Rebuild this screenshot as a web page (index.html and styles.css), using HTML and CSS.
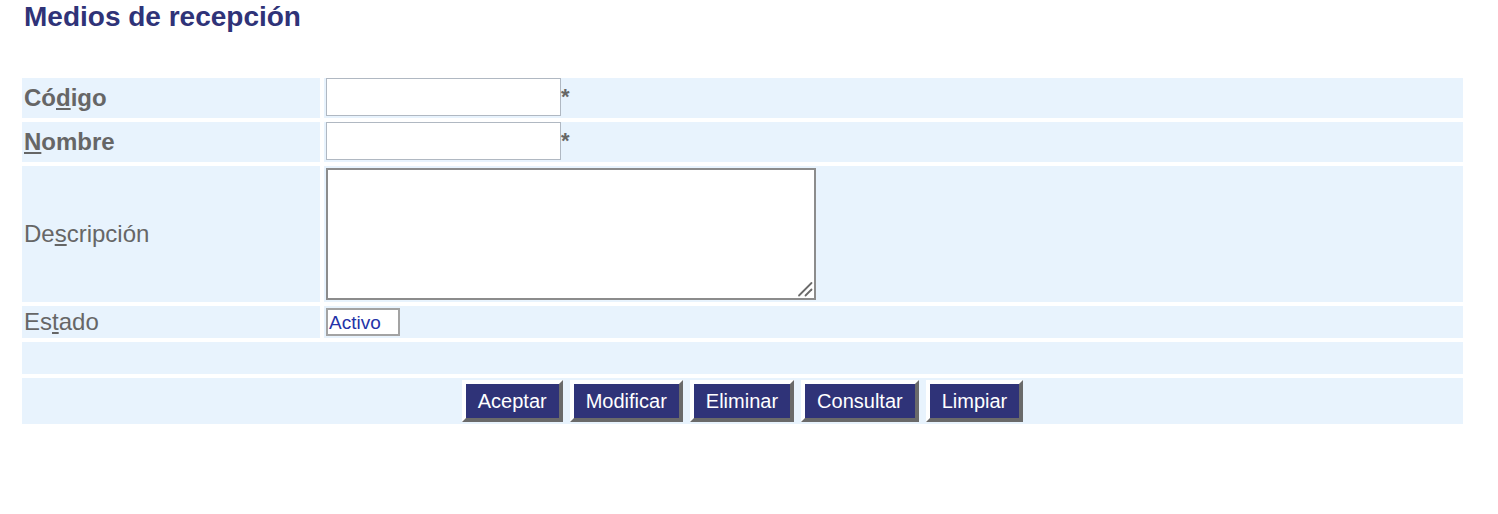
FILE: index.html
```html
<!DOCTYPE html>
<html lang="es">
<head>
<meta charset="utf-8">
<title>Medios de recepción</title>
<link rel="stylesheet" href="styles.css">
</head>
<body>
<h1 class="title">Medios de recepción</h1>
<form class="form">
  <div class="cell label bold">Có<u>d</u>igo</div>
  <div class="cell field"><input class="text-input" type="text"><span class="req">*</span></div>

  <div class="cell label bold"><u>N</u>ombre</div>
  <div class="cell field"><input class="text-input" type="text"><span class="req">*</span></div>

  <div class="cell label">De<u>s</u>cripción</div>
  <div class="cell field field-top">
    <div class="textarea-wrap">
      <textarea class="textarea"></textarea>
      <svg class="grip" width="16" height="16" viewBox="0 0 16 16" aria-hidden="true">
        <line x1="2" y1="14.5" x2="14.5" y2="2" stroke="#6b6b6b" stroke-width="1.8" stroke-linecap="round"/>
        <line x1="8.5" y1="14.5" x2="14.5" y2="8.5" stroke="#6b6b6b" stroke-width="1.8" stroke-linecap="round"/>
      </svg>
    </div>
  </div>

  <div class="cell label">Es<u>t</u>ado</div>
  <div class="cell field field-top"><span class="select">Activo</span></div>

  <div class="cell span"></div>

  <div class="cell span buttons">
    <button type="button" class="btn">Aceptar</button>
    <button type="button" class="btn">Modificar</button>
    <button type="button" class="btn">Eliminar</button>
    <button type="button" class="btn">Consultar</button>
    <button type="button" class="btn">Limpiar</button>
  </div>
</form>
</body>
</html>
```
FILE: styles.css
```css
html, body {
  margin: 0;
  padding: 0;
  background: #ffffff;
  font-family: "Liberation Sans", Arial, sans-serif;
}

.title {
  margin: 0;
  padding: 1px 0 0 24px;
  font-size: 28px;
  line-height: 32px;
  font-weight: bold;
  color: #2f3378;
}

.form {
  display: grid;
  grid-template-columns: 298px 1139px;
  grid-template-rows: 40px 40px 136px 32px 32px 46px;
  gap: 4px;
  margin: 45px 0 0 22px;
}

.cell {
  background: #e8f3fd;
}

.label {
  display: flex;
  align-items: center;
  padding-left: 2px;
  font-size: 24px;
  color: #666666;
}

.bold {
  font-weight: bold;
}

.field {
  display: flex;
  align-items: flex-start;
  padding-left: 2px;
}

.field-top {
  padding-top: 2px;
}

.text-input {
  box-sizing: border-box;
  width: 235px;
  height: 38px;
  margin: 0;
  border: 1px solid #b0b8c2;
  background: #ffffff;
  font-family: "Liberation Sans", Arial, sans-serif;
  font-size: 20px;
}

.req {
  font-size: 22px;
  font-weight: bold;
  color: #666666;
  line-height: 1;
  margin-top: 8px;
}

.textarea-wrap {
  position: relative;
  width: 490px;
  height: 132px;
}

.textarea {
  display: block;
  box-sizing: border-box;
  width: 490px;
  height: 132px;
  margin: 0;
  border: 2px solid #8c8c8c;
  background: #ffffff;
  resize: none;
  font-family: "Liberation Sans", Arial, sans-serif;
}

.grip {
  position: absolute;
  right: 3px;
  bottom: 3px;
  pointer-events: none;
}

.select {
  box-sizing: border-box;
  width: 74px;
  height: 28px;
  border: 2px solid #a3a3a3;
  background: #ffffff;
  color: #2433a8;
  font-size: 19px;
  line-height: 26px;
  padding-left: 1px;
}

.span {
  grid-column: 1 / 3;
}

.buttons {
  display: flex;
  justify-content: center;
  align-items: center;
  gap: 7px;
}

.btn {
  box-sizing: border-box;
  height: 42px;
  margin: 0;
  padding: 0 12px;
  border-width: 4px;
  border-style: solid;
  border-color: #ffffff #6a6a6a #6a6a6a #ffffff;
  background: #2f3378;
  color: #ffffff;
  font-family: "Liberation Sans", Arial, sans-serif;
  font-size: 20px;
  line-height: 24px;
}
```
